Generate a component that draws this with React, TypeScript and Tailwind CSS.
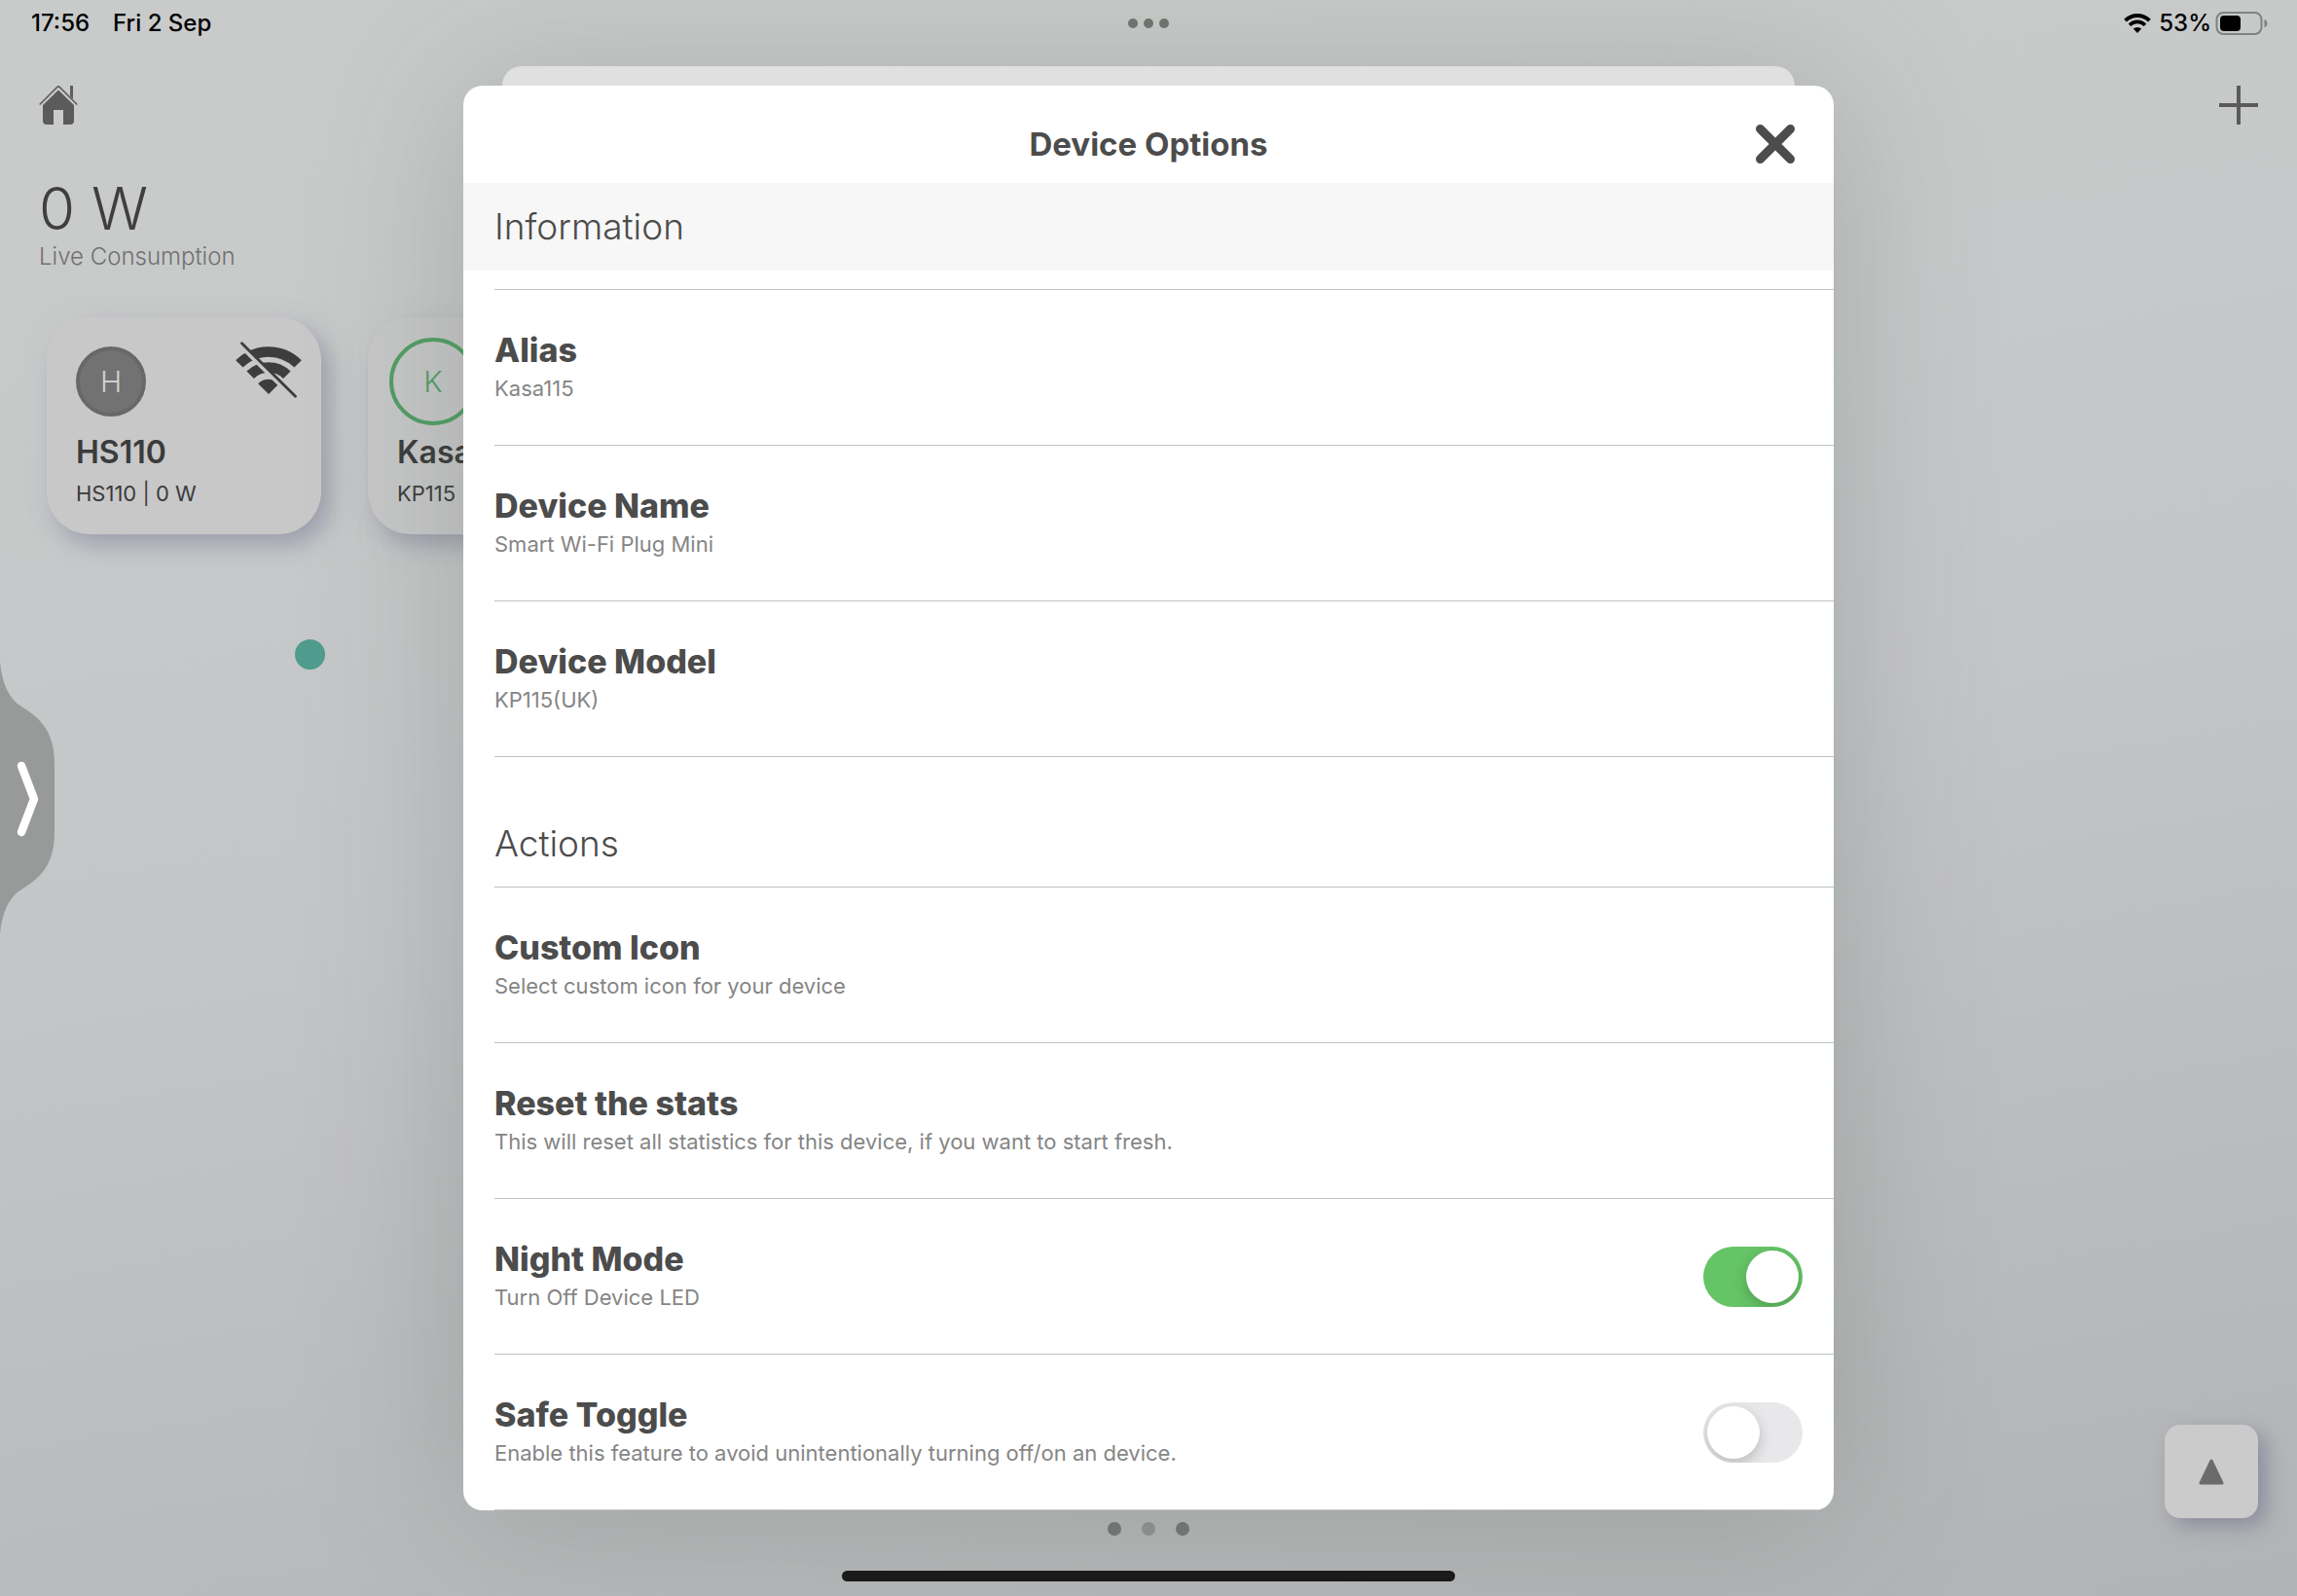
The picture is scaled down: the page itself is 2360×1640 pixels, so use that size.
import React, { useState } from 'react';

type Row = {
  title: string;
  subtitle: string;
};

const infoRows: Row[] = [
  { title: 'Alias', subtitle: 'Kasa115' },
  { title: 'Device Name', subtitle: 'Smart Wi-Fi Plug Mini' },
  { title: 'Device Model', subtitle: 'KP115(UK)' }
];

const actionRows: Row[] = [
  { title: 'Custom Icon', subtitle: 'Select custom icon for your device' },
  { title: 'Reset the stats', subtitle: 'This will reset all statistics for this device, if you want to start fresh.' }
];

function HomeIcon() {
  return (
    <svg viewBox="0 0 40 40" className="size-10" aria-hidden="true">
      <path d="M0.7 19.5 18.6 1.6a2 2 0 0 1 2.8 0L39.3 19.5" fill="none" stroke="#5e5e5e" strokeWidth="1.6" />
      <path d="M32 0h3v14l-3-3z" fill="#5e5e5e" />
      <path d="M20 4.5 36 20v16a4 4 0 0 1-4 4h-7V25H15v15H8a4 4 0 0 1-4-4V20z" fill="#5b5b5b" />
    </svg>
  );
}

function WifiOffIcon() {
  return (
    <svg viewBox="0 0 68 58" className="h-[58px] w-[68px]" aria-hidden="true">
      <g fill="none" stroke="#3d3d3d">
        <path d="M3.9 22.9A42.5 42.5 0 0 1 64.1 22.9" strokeWidth="10.5" />
        <path d="M15.2 34.2A26.5 26.5 0 0 1 52.8 34.2" strokeWidth="10.5" />
      </g>
      <path d="M34 54 23.2 43.2a15.3 15.3 0 0 1 21.6 0z" fill="#3d3d3d" />
      <path d="M3.5 3 58.5 57" stroke="#c7c7c8" strokeWidth="4" />
      <path d="M6.5 1.8 61.5 56.3" stroke="#3d3d3d" strokeWidth="2.8" strokeLinecap="round" />
    </svg>
  );
}

function StatusBar() {
  return (
    <div className="flex h-12 items-center justify-between pr-[30px] pl-8 text-2xl font-medium text-black">
      <div className="flex gap-6">
        <span>17:56</span>
        <span>Fri 2 Sep</span>
      </div>
      <div className="flex items-center">
        <svg viewBox="0 0 28 20" className="h-5 w-7" aria-hidden="true">
          <path d="M1.6 7.2a17.6 17.6 0 0 1 24.8 0" fill="none" stroke="#000" strokeWidth="4" />
          <path d="M6 11.7a11.4 11.4 0 0 1 16 0" fill="none" stroke="#000" strokeWidth="3.6" />
          <path d="M14 20l-4.2-4.4a6 6 0 0 1 8.4 0z" fill="#000" />
        </svg>
        <span className="mr-1 ml-2">53%</span>
        <svg viewBox="0 0 54 24" className="h-6 w-[54px]" aria-hidden="true">
          <rect x="1.5" y="1" width="46" height="22" rx="7" fill="none" stroke="#808182" strokeWidth="2" />
          <rect x="5" y="4" width="21" height="16" rx="4" fill="#000" />
          <path d="M50.5 8c4 1 4 7 0 8z" fill="#808182" />
        </svg>
      </div>
    </div>
  );
}

function DeviceCard({ name, detail, children }: { name: string; detail: string; children: React.ReactNode }) {
  return (
    <button
      type="button"
      className="flex h-[223px] w-[282px] shrink-0 flex-col rounded-[44px] bg-[#c8c8c9] px-[30px] pt-[21px] text-left text-[#3b3b3b] shadow-[8px_10px_24px_rgba(120,120,145,0.55),-4px_-4px_16px_rgba(205,207,207,0.6)]"
    >
      <span className="flex h-[90px] w-full items-center justify-between">{children}</span>
      <span className="mt-1.5 text-[32px] leading-[44px] font-semibold">{name}</span>
      <span className="mt-1 text-[22px] leading-8">{detail}</span>
    </button>
  );
}

function SectionRow({ title, subtitle }: Row) {
  return (
    <li className="min-h-40 border-t border-[#c2c2c4] pt-10">
      <h3 className="text-[34px] leading-[44px] font-extrabold text-[#4c4c4c]">{title}</h3>
      <p className="text-[22px] leading-[34px] text-[#858585]">{subtitle}</p>
    </li>
  );
}

function ToggleRow({
  id,
  title,
  subtitle,
  checked,
  onChange
}: Row & { id: string; checked: boolean; onChange: (value: boolean) => void }) {
  return (
    <li className="min-h-40 border-t border-[#c2c2c4]">
      <label htmlFor={id} className="flex items-center justify-between pr-8">
        <span className="flex h-[159px] flex-col pt-10">
          <span className="text-[34px] leading-[44px] font-extrabold text-[#4c4c4c]">{title}</span>
          <span className="text-[22px] leading-[34px] text-[#858585]">{subtitle}</span>
        </span>
        <input
          id={id}
          type="checkbox"
          role="switch"
          checked={checked}
          onChange={(e) => onChange(e.target.checked)}
          className="h-[62px] w-[102px] shrink-0 appearance-none overflow-hidden rounded-full bg-[#e8e8ea] p-1 before:block before:size-[54px] before:rounded-full before:bg-white before:shadow-[0_5px_14px_rgba(0,0,0,0.2)] checked:bg-[#65c466] checked:before:translate-x-10"
        />
      </label>
    </li>
  );
}

export default function App() {
  const [nightMode, setNightMode] = useState(true);
  const [safeToggle, setSafeToggle] = useState(false);

  return (
    <div className="relative flex min-h-screen flex-col overflow-hidden bg-linear-170 from-[#c9cbca] from-10% via-[#c4c5c8] via-50% to-[#b1b3b4] font-['Inter',sans-serif]">
      <StatusBar />

      <main className="flex grow flex-col">
        <div className="flex items-center justify-between px-10 pt-10">
          <button type="button" aria-label="Home">
            <HomeIcon />
          </button>
          <button type="button" aria-label="Add device">
            <svg viewBox="0 0 40 40" className="size-10" aria-hidden="true">
              <path d="M20 0v40M0 20h40" stroke="#5b5b5b" strokeWidth="4" />
            </svg>
          </button>
        </div>

        <div className="px-10 pt-[54px]">
          <p className="text-6xl leading-[64px] font-light text-[#3f3f3f]">0 W</p>
          <p className="text-2xl leading-9 font-light text-[#6f7070]">Live Consumption</p>
        </div>

        <div className="flex gap-12 px-12 pt-11">
          <DeviceCard name="HS110" detail="HS110 | 0 W">
            <span className="flex size-[72px] items-center justify-center rounded-full border-4 border-[#686868] bg-[#727272] text-[30px] font-light text-[#d0d0d0]">
              H
            </span>
            <span className="-mr-2.5 mb-6">
              <WifiOffIcon />
            </span>
          </DeviceCard>
          <DeviceCard name="Kasa115" detail="KP115">
            <span className="-ml-2 flex size-[90px] items-center justify-center rounded-full border-4 border-[#519f65] text-[30px] font-light text-[#519f65]">
              K
            </span>
          </DeviceCard>
        </div>

        <div className="mt-[108px] ml-[303px] size-[31px] rounded-full bg-[#509c8e]" />
      </main>

      <footer className="flex flex-col items-center pb-[15px]">
        <div className="flex gap-[21px]">
          <span className="size-3.5 rounded-full bg-[#757776]" />
          <span className="size-3.5 rounded-full bg-[#929493]" />
          <span className="size-3.5 rounded-full bg-[#757776]" />
        </div>
        <div className="mt-9 h-[11px] w-[630px] rounded-full bg-[#181818]" />
      </footer>

      <div className="absolute top-[19px] left-1/2 flex -translate-x-1/2 gap-1.5">
        <span className="size-2.5 rounded-full bg-[#707570]" />
        <span className="size-2.5 rounded-full bg-[#707570]" />
        <span className="size-2.5 rounded-full bg-[#707570]" />
      </div>

      <button type="button" aria-label="Open drawer" className="absolute top-[680px] left-0">
        <svg viewBox="0 0 56 280" className="h-[280px] w-14" aria-hidden="true">
          <path d="M0 0C2 22 9 38 22 46C42 58 56 72 56 105V175C56 208 42 222 22 234C9 242 2 258 0 280z" fill="#989a9a" />
          <path
            d="M22 107 35 141 22 175"
            fill="none"
            stroke="#fff"
            strokeWidth="8.5"
            strokeLinecap="round"
            strokeLinejoin="round"
          />
        </svg>
      </button>

      <button
        type="button"
        aria-label="Scroll to top"
        className="absolute right-10 bottom-20 flex size-24 items-center justify-center rounded-2xl bg-[#cbcbcb] shadow-[8px_8px_20px_rgba(120,120,145,0.65)]"
      >
        <svg viewBox="0 0 26 28" className="h-7 w-[26px]" aria-hidden="true">
          <path d="M13 3 24 26H2z" fill="#6b6b6b" stroke="#6b6b6b" strokeWidth="3" strokeLinejoin="round" />
        </svg>
      </button>

      <div className="absolute inset-0 flex flex-col items-center pt-[68px]">
        <div className="z-10 h-5 w-[1328px] rounded-t-[20px] bg-[#e0e0e0]" />
        <section
          role="dialog"
          aria-labelledby="dialog-title"
          className="w-[1408px] overflow-hidden rounded-[20px] bg-white shadow-[0_0_160px_rgba(80,95,80,0.28)]"
        >
          <header className="grid h-[100px] grid-cols-[1fr_auto_1fr] items-center px-10 pt-5">
            <h1 id="dialog-title" className="col-start-2 text-[33px] leading-10 font-bold text-[#4c4c4c]">
              Device Options
            </h1>
            <button type="button" aria-label="Close" className="justify-self-end">
              <svg viewBox="0 0 40 40" className="size-10" aria-hidden="true">
                <path d="M4.5 4.5 35.5 35.5M35.5 4.5 4.5 35.5" stroke="#4c4c4c" strokeWidth="9" strokeLinecap="round" />
              </svg>
            </button>
          </header>

          <h2 className="h-[90px] bg-[#f7f7f7] pl-8 text-[37px] leading-[90px] font-light text-[#4c4c4c]">Information</h2>
          <ul className="mt-[19px] pl-8">
            {infoRows.map((row) => (
              <SectionRow key={row.title} {...row} />
            ))}
          </ul>

          <div className="pl-8">
            <h2 className="h-[134px] border-t border-[#c2c2c4] pt-[66px] text-[37px] leading-[46px] font-light text-[#4c4c4c]">
              Actions
            </h2>
            <ul className="border-b border-[#c2c2c4]">
              {actionRows.map((row) => (
                <SectionRow key={row.title} {...row} />
              ))}
              <ToggleRow
                id="night-mode"
                title="Night Mode"
                subtitle="Turn Off Device LED"
                checked={nightMode}
                onChange={setNightMode}
              />
              <ToggleRow
                id="safe-toggle"
                title="Safe Toggle"
                subtitle="Enable this feature to avoid unintentionally turning off/on an device."
                checked={safeToggle}
                onChange={setSafeToggle}
              />
            </ul>
          </div>
        </section>
      </div>
    </div>
  );
}
